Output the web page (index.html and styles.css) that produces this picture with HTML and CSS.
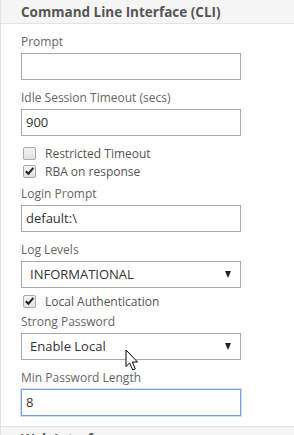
FILE: index.html
```html
<!DOCTYPE html>
<html>
<head>
<meta charset="utf-8">
<link rel="stylesheet" href="styles.css">
</head>
<body>
<div class="panel">
  <div class="section-head">Command Line Interface (CLI)</div>
  <div class="section-body">
    <div class="field">
      <div class="label">Prompt</div>
      <div class="input"></div>
    </div>
    <div class="field">
      <div class="label">Idle Session Timeout (secs)</div>
      <div class="input">900</div>
    </div>
    <div class="checks">
      <div class="check"><span class="box"></span><span>Restricted Timeout</span></div>
      <div class="check"><span class="box checked"><svg viewBox="0 0 12 12" width="12" height="12"><path d="M2 6.2 L4.8 9 L10.2 2.6" fill="none" stroke="#222" stroke-width="2.2"/></svg></span><span>RBA on response</span></div>
    </div>
    <div class="field">
      <div class="label">Login Prompt</div>
      <div class="input">default:\</div>
    </div>
    <div class="field">
      <div class="label">Log Levels</div>
      <div class="select"><span>INFORMATIONAL</span><span class="arrow"></span></div>
    </div>
    <div class="check single"><span class="box checked"><svg viewBox="0 0 12 12" width="12" height="12"><path d="M2 6.2 L4.8 9 L10.2 2.6" fill="none" stroke="#222" stroke-width="2.2"/></svg></span><span>Local Authentication</span></div>
    <div class="field">
      <div class="label">Strong Password</div>
      <div class="select"><span>Enable Local</span><span class="arrow"></span></div>
    </div>
    <div class="field">
      <div class="label">Min Password Length</div>
      <div class="input focus">8</div>
    </div>
  </div>
  <div class="section-head next">Web Interface</div>
  <svg class="cursor" width="15" height="23" viewBox="0 0 15 23"><path d="M1 1 L1 17.5 L4.7 14 L7.7 21 L10.3 19.9 L7.3 13 L12.5 13 Z" fill="#fff" stroke="#000" stroke-width="1" stroke-linejoin="miter"/></svg>
</div>
</body>
</html>
```
FILE: styles.css
```css
html, body {
  margin: 0;
  padding: 0;
  background: #fff;
}
body {
  font-family: "Open Sans", "Segoe UI", sans-serif;
  width: 294px;
  height: 435px;
  overflow: hidden;
}
.panel {
  position: relative;
  border-left: 1px solid #e3e3e3;
  height: 435px;
  box-sizing: border-box;
}
.section-head {
  height: 23px;
  line-height: 24px;
  background: #f5f5f5;
  border-bottom: 1px solid #e4e4e4;
  padding-left: 20px;
  font-size: 13.5px;
  font-weight: 700;
  color: #555;
}
.section-head.next {
  border-top: 1px solid #e4e4e4;
  border-bottom: none;
}
.section-body {
  padding: 10px 0 10px 20px;
  display: flex;
  flex-direction: column;
  gap: 10px;
}
.field {
  display: flex;
  flex-direction: column;
  gap: 3px;
}
.label {
  font-size: 12px;
  line-height: 16px;
  color: #666;
}
.input, .select {
  width: 220px;
  height: 27px;
  box-sizing: border-box;
  border: 1px solid #a9a9a9;
  font-size: 13px;
  color: #333;
  line-height: 25px;
  padding-left: 4px;
}
.input.focus {
  border-color: #7b9fe0;
  box-shadow: 0 0 0 1px rgba(123,159,224,0.35);
}
.select {
  display: flex;
  justify-content: space-between;
  align-items: center;
  padding-left: 8px;
  padding-right: 9px;
  color: #333;
}
.arrow {
  width: 0;
  height: 0;
  border-left: 3.5px solid transparent;
  border-right: 3.5px solid transparent;
  border-top: 7px solid #222;
}
.checks {
  display: flex;
  flex-direction: column;
  margin-top: -2px;
  margin-bottom: -4px;
}
.check {
  display: flex;
  align-items: center;
  height: 18px;
  font-size: 12px;
  color: #555;
}
.check.single {
  margin-top: -6px;
  margin-bottom: -6px;
}
.box {
  width: 13px;
  height: 13px;
  box-sizing: border-box;
  border: 1px solid #a8a8a8;
  border-radius: 2px;
  background: linear-gradient(#f4f4f4, #e2e2e2);
  margin-left: 2px;
  margin-right: 9px;
  display: flex;
  align-items: center;
  justify-content: center;
}
.box svg { display: block; }
.cursor {
  position: absolute;
  left: 124px;
  top: 349px;
}
```
